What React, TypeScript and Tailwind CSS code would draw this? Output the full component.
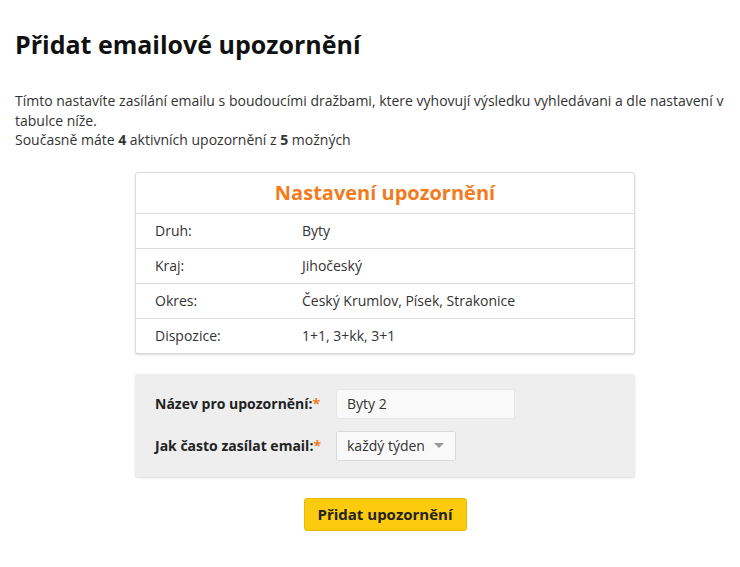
import React, { useState } from "react";

const rows = [
  { label: "Druh:", value: "Byty" },
  { label: "Kraj:", value: "Jihočeský" },
  { label: "Okres:", value: "Český Krumlov, Písek, Strakonice" },
  { label: "Dispozice:", value: "1+1, 3+kk, 3+1" },
];

const App: React.FC = () => {
  const [name, setName] = useState("Byty 2");

  return (
    <div className="min-h-screen bg-white font-['Open_Sans',sans-serif] text-[14px] text-[#333]">
      <h1 className="px-[15px] pt-[27px] text-[25px] font-bold leading-[34px] text-[#111]">
        Přidat emailové upozornění
      </h1>

      <p className="mt-[30px] pl-[15px] pr-[10px] leading-[19.5px]">
        Tímto nastavíte zasílání emailu s boudoucími dražbami, ktere vyhovují výsledku vyhledávani a dle nastavení v
        tabulce níže.
        <br />
        Současně máte <b>4</b> aktivních upozornění z <b>5</b> možných
      </p>

      <div className="ml-[135px] mt-[22px] w-[500px]">
        <div className="rounded-[3px] border border-[#dcdcdc] bg-white shadow-[0_1px_2px_rgba(0,0,0,0.15)]">
          <div className="flex h-[40px] items-center justify-center text-[20px] font-bold text-[#f47a20]">
            Nastavení upozornění
          </div>
          {rows.map((r) => (
            <div key={r.label} className="flex h-[35px] items-center border-t border-[#dcdcdc] pl-[19px]">
              <span className="w-[147px]">{r.label}</span>
              <span>{r.value}</span>
            </div>
          ))}
        </div>

        <div className="mt-[20px] flex flex-col gap-[12px] rounded-[3px] bg-[#eeeeee] px-[20px] pb-[16px] pt-[15px] shadow-[0_1px_2px_rgba(0,0,0,0.15)]">
          <div className="flex items-center">
            <label className="w-[181px] font-bold text-[#222]">
              Název pro upozornění:<span className="text-[#f47a20]">*</span>
            </label>
            <input
              value={name}
              onChange={(e) => setName(e.target.value)}
              className="h-[30px] w-[179px] rounded-[3px] border border-[#e6e6e6] bg-[#f9f9f9] px-[10px] text-[14px] text-[#333] outline-none"
            />
          </div>
          <div className="flex items-center">
            <label className="w-[181px] font-bold text-[#222]">
              Jak často zasílat email:<span className="text-[#f47a20]">*</span>
            </label>
            <div className="flex h-[30px] w-[120px] items-center justify-between rounded-[2px] border border-[#d9d9d9] bg-[#f9f9f9] pl-[10px] pr-[11px]">
              <span>každý týden</span>
              <span className="h-0 w-0 border-x-[5px] border-t-[5px] border-x-transparent border-t-[#999]" />
            </div>
          </div>
        </div>

        <div className="mt-[21px] flex justify-center">
          <button className="h-[33px] w-[163px] rounded-[3px] border border-[#e6b800] bg-[#fdcb0d] text-[15px] font-bold text-[#222]">
            Přidat upozornění
          </button>
        </div>
      </div>
    </div>
  );
};

export default App;
